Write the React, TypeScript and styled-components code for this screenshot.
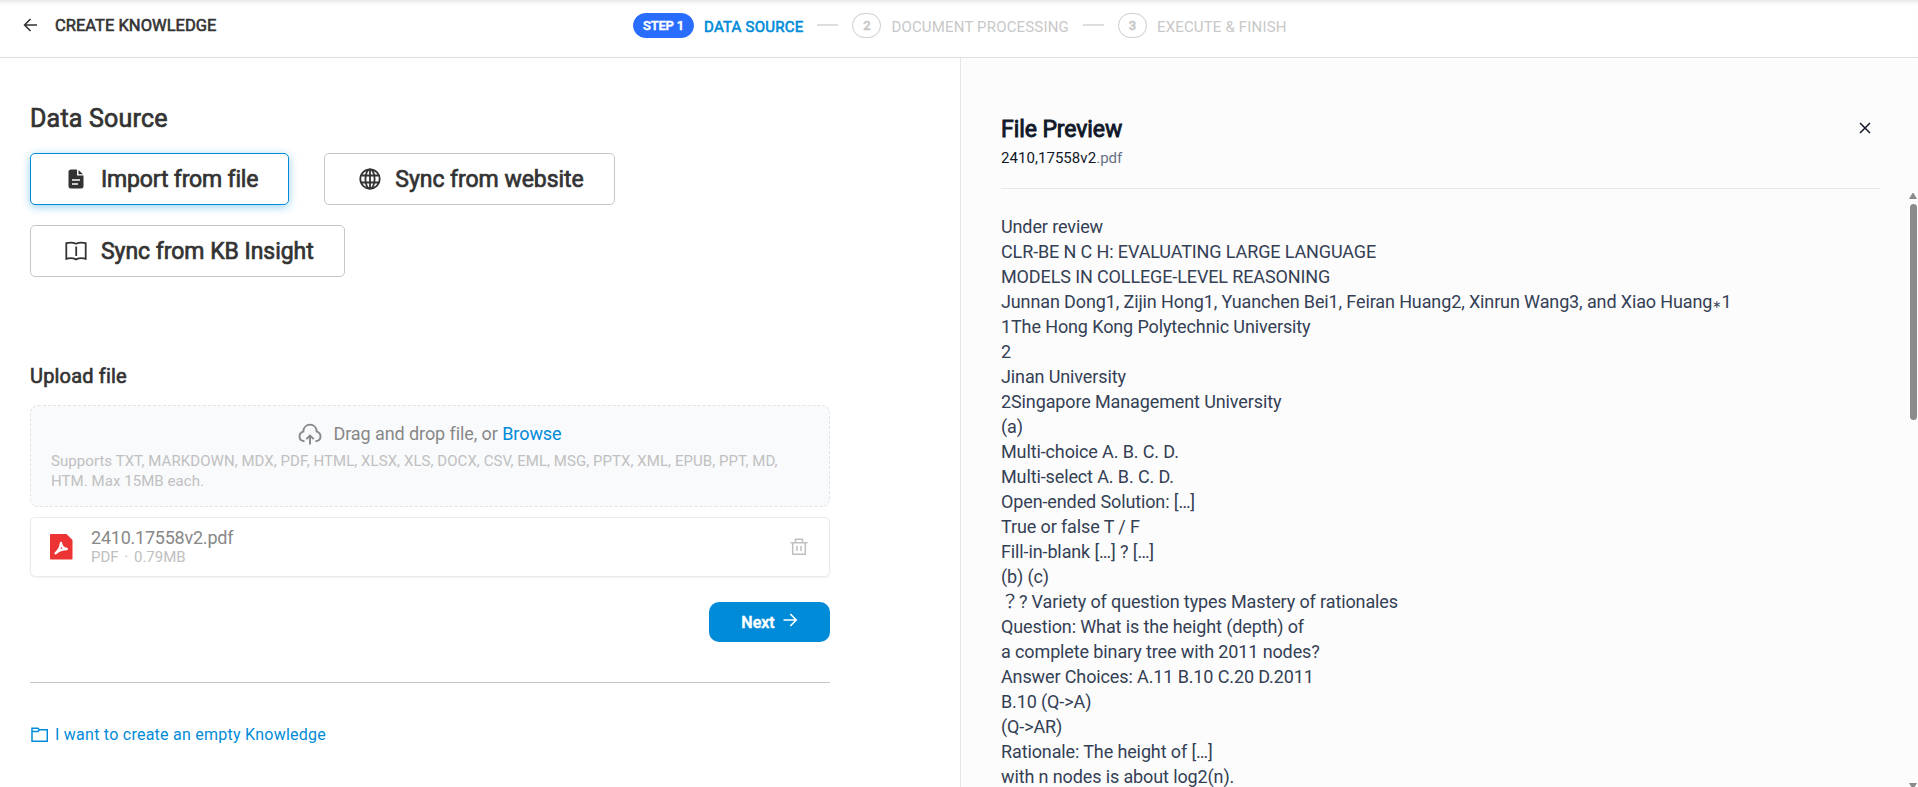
import React from "react";
import styled, { createGlobalStyle } from "styled-components";

const GlobalStyle = createGlobalStyle`
  * { box-sizing: border-box; }
  body {
    margin: 0;
    background: #fff;
    color: #333;
    font-family: Roboto, "Noto Sans CJK JP", sans-serif;
    overflow: hidden;
  }
  svg { display: block; flex: none; }
  button { font-family: inherit; cursor: pointer; }
`;

const Page = styled.div`
  display: flex;
  flex-direction: column;
  width: 100%;
  height: 100vh;
`;

const Header = styled.header`
  display: grid;
  grid-template-columns: 633px auto;
  height: 58px;
  padding-bottom: 7px;
  border-bottom: 1px solid #dedede;
  box-shadow: inset 0 5px 5px -4px rgba(0, 0, 0, 0.15);
`;

const HeaderTitle = styled.div`
  display: flex;
  align-items: center;
  gap: 16px;
  padding-left: 23px;
  font-size: 16.5px;
  letter-spacing: 0.02px;
  -webkit-text-stroke: 0.6px currentColor;
`;

const Steps = styled.nav`
  display: flex;
  align-items: center;
`;

const StepBadge = styled.span<{ $active?: boolean }>`
  display: flex;
  align-items: center;
  justify-content: center;
  width: ${(p) => (p.$active ? 61 : 29)}px;
  height: 25px;
  border: 1px solid ${(p) => (p.$active ? "#296dff" : "#ccc")};
  border-radius: 13px;
  background: ${(p) => (p.$active ? "#296dff" : "#fff")};
  color: ${(p) => (p.$active ? "#fff" : "#c8c8c8")};
  font-size: 13px;
  font-weight: 500;
  letter-spacing: ${(p) => (p.$active ? "-0.2px" : "0")};
  -webkit-text-stroke: 0.5px currentColor;
`;

const StepLabel = styled.span<{ $active?: boolean }>`
  padding-top: 3px;
  margin-left: 10px;
  font-size: 15px;
  letter-spacing: ${(p) => (p.$active ? 0.23 : 0.17)}px;
  white-space: nowrap;
  color: ${(p) => (p.$active ? "#008bd9" : "#c8c8c8")};
  -webkit-text-stroke: ${(p) => (p.$active ? "0.6px currentColor" : "0")};
`;

const StepDash = styled.span`
  width: 21px;
  height: 2px;
  margin: 0 14px;
  background: #dedede;
`;

const Columns = styled.main`
  display: grid;
  grid-template-columns: 960px 1fr;
  flex: 1;
  min-height: 0;
`;

const SourcePane = styled.section`
  padding: 46px 130px 0 30px;
`;

const Title = styled.h1`
  margin: 0;
  font-size: 25px;
  line-height: 30px;
  letter-spacing: 0.2px;
  font-weight: 400;
  -webkit-text-stroke: 0.7px currentColor;
`;

const SourceGrid = styled.div`
  display: flex;
  flex-wrap: wrap;
  gap: 20px 35px;
  margin-top: 19px;
`;

const SourceButton = styled.button<{ $active?: boolean }>`
  display: flex;
  align-items: center;
  gap: 13px;
  height: 52px;
  padding: 0 30px 0 33px;
  border: 1px solid ${(p) => (p.$active ? "#008bd9" : "#c6c6c6")};
  border-radius: 5px;
  background: #fff;
  color: #333;
  font-size: 23px;
  letter-spacing: ${(p) => (p.$active ? -0.17 : -0.04)}px;
  box-shadow: ${(p) => (p.$active ? "0 2px 10px rgba(0, 139, 217, 0.4)" : "none")};
  -webkit-text-stroke: 0.7px currentColor;
`;

const SectionTitle = styled.h2`
  margin: 87px 0 0;
  font-size: 20px;
  line-height: 24px;
  letter-spacing: 0.18px;
  font-weight: 400;
  -webkit-text-stroke: 0.65px currentColor;
`;

const DropZone = styled.div`
  height: 102px;
  margin-top: 17px;
  padding: 14px 20px 0;
  border: 1px dashed #e2e4e8;
  border-radius: 8px;
  background: #f9fafc;
`;

const DropPrompt = styled.div`
  display: flex;
  align-items: center;
  justify-content: center;
  gap: 11px;
  height: 27px;
  font-size: 18px;
  letter-spacing: -0.08px;
  color: #888;
`;

const Browse = styled.a`
  color: #008bd9;
`;

const DropHint = styled.p`
  margin: 4px 0 0;
  font-size: 15px;
  line-height: 20px;
  letter-spacing: 0.06px;
  color: #c0c0c0;
`;

const FileCard = styled.div`
  display: flex;
  align-items: center;
  height: 60px;
  margin-top: 10px;
  padding: 0 21px 0 18px;
  border: 1px solid #ebebeb;
  border-radius: 5px;
  background: #fff;
  box-shadow: 0 1px 2px rgba(0, 0, 0, 0.05);
`;

const FileInfo = styled.div`
  flex: 1;
  margin-left: 18px;
`;

const FileName = styled.div`
  font-size: 18px;
  line-height: 20px;
  letter-spacing: -0.23px;
  color: #888;
`;

const FileMeta = styled.div`
  font-size: 15px;
  line-height: 18px;
  color: #c0c0c0;
  span { margin: 0 2px; }
`;

const Actions = styled.div`
  display: flex;
  justify-content: flex-end;
  padding: 25px 0 40px;
  border-bottom: 1px solid #c6c6c6;
`;

const NextButton = styled.button`
  display: flex;
  align-items: center;
  justify-content: center;
  gap: 7px;
  width: 121px;
  height: 40px;
  border: 0;
  border-radius: 10px;
  background: #008bd9;
  color: #fff;
  font-size: 16px;
  font-weight: 500;
  -webkit-text-stroke: 0.5px currentColor;
  svg { margin-bottom: 4px; }
`;

const EmptyLink = styled.a`
  display: flex;
  align-items: center;
  gap: 7px;
  margin-top: 42px;
  color: #008bd9;
  font-size: 16px;
  line-height: 20px;
  letter-spacing: 0.25px;
`;

const PreviewPane = styled.aside`
  display: flex;
  flex-direction: column;
  min-height: 0;
  padding: 56px 0 0 40px;
  border-left: 1px solid #e6e6e6;
  background: #fcfcfd;
`;

const PreviewHeader = styled.div`
  display: flex;
  justify-content: space-between;
  height: 75px;
  margin-right: 38px;
  padding-right: 9px;
  border-bottom: 1px solid #e9e9eb;
`;

const PreviewTitle = styled.h2`
  margin: 0;
  padding-top: 1px;
  font-size: 23px;
  line-height: 30px;
  letter-spacing: -0.08px;
  font-weight: 400;
  color: #101828;
  -webkit-text-stroke: 0.9px currentColor;
`;

const PreviewFile = styled.div`
  margin-top: 1px;
  font-size: 15px;
  line-height: 24px;
  letter-spacing: 0.05px;
  color: #101828;
  span { color: #667085; }
`;

const CloseIcon = styled.svg`
  margin-top: 8px;
`;

const PreviewBody = styled.div`
  display: flex;
  flex: 1;
  min-height: 0;
  overflow: hidden;
`;

const PreviewText = styled.div`
  flex: 1;
  padding-top: 25px;
  font-size: 18px;
  line-height: 25px;
  letter-spacing: -0.12px;
  color: #344054;
`;

const TextLine = styled.div`
  height: 25px;
  white-space: pre;
`;

const Asterisk = styled.span`
  font-family: "DejaVu Sans", sans-serif;
  font-size: 11px;
  line-height: 1;
`;

const Scrollbar = styled.div`
  display: flex;
  flex-direction: column;
  align-items: center;
  width: 8px;
  padding-top: 4px;
  margin-right: 1px;
`;

const ScrollThumb = styled.div`
  width: 7px;
  height: 216px;
  margin: 5px 0 auto;
  border-radius: 4px;
  background: #8b8b8b;
`;

const ScrollDown = styled.svg`
  margin-bottom: -2px;
`;

const lines: React.ReactNode[] = [
  "Under review",
  "CLR-BE N C H: EVALUATING LARGE LANGUAGE",
  "MODELS IN COLLEGE-LEVEL REASONING",
  <>Junnan Dong1, Zijin Hong1, Yuanchen Bei1, Feiran Huang2, Xinrun Wang3, and Xiao Huang<Asterisk>∗</Asterisk>1</>,
  "1The Hong Kong Polytechnic University",
  "2",
  "Jinan University",
  "2Singapore Management University",
  "(a)",
  "Multi-choice A. B. C. D.",
  "Multi-select A. B. C. D.",
  "Open-ended Solution: […]",
  "True or false T / F",
  "Fill-in-blank […] ? […]",
  "(b) (c)",
  "？? Variety of question types Mastery of rationales",
  "Question: What is the height (depth) of",
  "a complete binary tree with 2011 nodes?",
  "Answer Choices: A.11 B.10 C.20 D.2011",
  "B.10 (Q->A)",
  "(Q->AR)",
  "Rationale: The height of […]",
  "with n nodes is about log2(n).",
];

const Arrow = ({ left }: { left?: boolean }) => (
  <svg width="16" height="16" viewBox="0 0 16 16" fill="none" stroke="currentColor" strokeWidth="1.6">
    {left ? <path d="M14 8H1.800M7.500 2L1.600 8l5.900 6" /> : <path d="M1.500 8H14M8.300 2l5.900 6-5.900 6" />}
  </svg>
);

const FileIcon = () => (
  <svg width="24" height="24" viewBox="0 0 24 24">
    <path fill="#333" d="M7 2.500h6V8.500h6.500V19a2.500 2.500 0 0 1-2.500 2.500H7A2.500 2.500 0 0 1 4.500 19V5A2.500 2.500 0 0 1 7 2.500zM14.500 3l4.500 4.300h-4.500z" />
    <path d="M8 13h8M8 17h6" stroke="#fff" strokeWidth="1.500" />
  </svg>
);

const GlobeIcon = () => (
  <svg width="24" height="24" viewBox="0 0 24 24" fill="none" stroke="#333" strokeWidth="1.800">
    <circle cx="12" cy="12" r="9.700" />
    <ellipse cx="12" cy="12" rx="4.600" ry="9.700" />
    <path d="M12 2.300v19.400M3.300 8.500h17.400M3.300 15.500h17.400" />
  </svg>
);

const BookIcon = () => (
  <svg width="24" height="24" viewBox="0 0 24 24" fill="none" stroke="#333" strokeWidth="1.800">
    <path d="M2.300 4.200c3.500-1 6.500-1 9.700.6 3.200-1.600 6.200-1.600 9.700-.6v15.600c-3.500-1-6.500-1-9.700.6-3.200-1.600-6.200-1.600-9.700-.6z" />
    <path d="M12.200 7.500v9.500" />
  </svg>
);

const CloudIcon = () => (
  <svg width="24" height="24" viewBox="0 0 24 24" fill="none" stroke="#888" strokeWidth="1.900">
    <path d="M6.500 19.200C3.200 18.800 1.500 16.700 1.500 14.400c0-2.400 1.500-4.200 3.800-4.800C5.500 5.500 8.300 2.600 12 2.600s6.500 2.900 6.700 7c2.300.6 3.800 2.400 3.800 4.800 0 2.300-1.700 4.400-5 4.800" />
    <path d="M12 22.500v-8.500M8.300 17.200L12 13.500l3.700 3.700" />
  </svg>
);

const PdfIcon = () => (
  <svg width="24" height="26" viewBox="0 0 24 26">
    <path fill="#ec3434" d="M2 0h15.500L23.500 6v18.500a1 1 0 0 1-1 1H2a1 1 0 0 1-1-1V1a1 1 0 0 1 1-1z" />
    <path d="M12 8.800c.4 3 2.600 5.600 5.800 6.200-4.300.1-8 1.400-11.300 4.300 3-2.600 5-6.500 5.500-10.500z" fill="none" stroke="#fff" strokeWidth="2.300" strokeLinejoin="round" />
  </svg>
);

const TrashIcon = () => (
  <svg width="18" height="18" viewBox="0 0 18 18" fill="none" stroke="#bfbfbf" strokeWidth="1.500">
    <path d="M.5 4.700h17M2.700 4.700v11.600h12.600V4.700M5.500 4.500V1.300h7v3.200M7 8v5M11 8v5" />
  </svg>
);

const FolderIcon = () => (
  <svg width="18" height="16" viewBox="0 0 18 16" fill="none" stroke="#008bd9" strokeWidth="1.500">
    <path d="M2 1.200h6l1.200 1.500h8.100v11.600H2zM2 4.500h6l1.200-1.500" />
  </svg>
);

export default function App() {
  return (
    <Page>
      <GlobalStyle />
      <Header>
        <HeaderTitle>
          <Arrow left />
          CREATE KNOWLEDGE
        </HeaderTitle>
        <Steps>
          <StepBadge $active>STEP 1</StepBadge>
          <StepLabel $active>DATA SOURCE</StepLabel>
          <StepDash />
          <StepBadge>2</StepBadge>
          <StepLabel>DOCUMENT PROCESSING</StepLabel>
          <StepDash />
          <StepBadge>3</StepBadge>
          <StepLabel>EXECUTE &amp; FINISH</StepLabel>
        </Steps>
      </Header>
      <Columns>
        <SourcePane>
          <Title>Data Source</Title>
          <SourceGrid>
            <SourceButton $active><FileIcon />Import from file</SourceButton>
            <SourceButton><GlobeIcon />Sync from website</SourceButton>
            <SourceButton><BookIcon />Sync from KB Insight</SourceButton>
          </SourceGrid>
          <SectionTitle>Upload file</SectionTitle>
          <DropZone>
            <DropPrompt>
              <CloudIcon />
              <span>Drag and drop file, or <Browse>Browse</Browse></span>
            </DropPrompt>
            <DropHint>
              Supports TXT, MARKDOWN, MDX, PDF, HTML, XLSX, XLS, DOCX, CSV, EML, MSG, PPTX, XML, EPUB, PPT, MD, HTM. Max 15MB each.
            </DropHint>
          </DropZone>
          <FileCard>
            <PdfIcon />
            <FileInfo>
              <FileName>2410.17558v2.pdf</FileName>
              <FileMeta>PDF <span>·</span> 0.79MB</FileMeta>
            </FileInfo>
            <TrashIcon />
          </FileCard>
          <Actions>
            <NextButton>Next<Arrow /></NextButton>
          </Actions>
          <EmptyLink><FolderIcon />I want to create an empty Knowledge</EmptyLink>
        </SourcePane>
        <PreviewPane>
          <PreviewHeader>
            <div>
              <PreviewTitle>File Preview</PreviewTitle>
              <PreviewFile>2410,17558v2<span>.pdf</span></PreviewFile>
            </div>
            <CloseIcon width="12" height="12" viewBox="0 0 12 12" stroke="#101828" strokeWidth="1.5">
              <path d="M1 1l10 10M11 1L1 11" />
            </CloseIcon>
          </PreviewHeader>
          <PreviewBody>
            <PreviewText>
              {lines.map((line, i) => <TextLine key={i}>{line}</TextLine>)}
            </PreviewText>
            <Scrollbar>
              <svg width="8" height="6" viewBox="0 0 8 6"><path fill="#8b8b8b" d="M3.500 0h1L8 6H0z" /></svg>
              <ScrollThumb />
              <ScrollDown width="8" height="6" viewBox="0 0 8 6"><path fill="#8b8b8b" d="M0 0h8L4.500 6h-1z" /></ScrollDown>
            </Scrollbar>
          </PreviewBody>
        </PreviewPane>
      </Columns>
    </Page>
  );
}
